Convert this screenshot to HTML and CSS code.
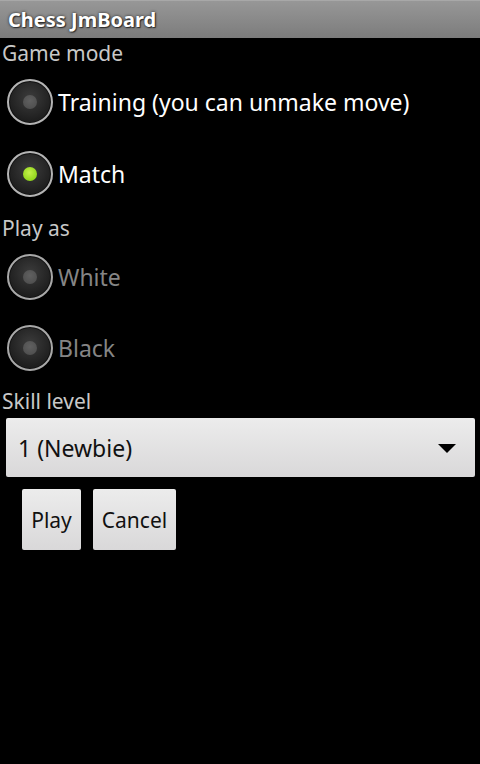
FILE: index.html
```html
<!DOCTYPE html>
<html lang="en">
<head>
    <meta charset="UTF-8">
    <meta name="viewport" content="width=device-width, initial-scale=1.0">
    <title>Chess JmBoard</title>
    <link rel="stylesheet" href="styles.css">
</head>
<body>

<!-- Title Bar -->
<div class="title-bar">Chess JmBoard</div>

<!-- Game mode -->
<div class="label label-first">Game mode</div>
<div class="radio-row">
    <span class="radio"></span>
    <span class="radio-text">Training (you can unmake move)</span>
</div>
<div class="radio-row">
    <span class="radio checked"></span>
    <span class="radio-text">Match</span>
</div>

<!-- Play as -->
<div class="label">Play as</div>
<div class="radio-row disabled">
    <span class="radio"></span>
    <span class="radio-text">White</span>
</div>
<div class="radio-row disabled">
    <span class="radio"></span>
    <span class="radio-text">Black</span>
</div>

<!-- Skill level -->
<div class="label">Skill level</div>
<div class="spinner">
    <span class="spinner-text">1 (Newbie)</span>
    <span class="spinner-arrow"></span>
</div>

<div class="buttons">
    <button class="btn btn-play">Play</button>
    <button class="btn btn-cancel">Cancel</button>
</div>

</body>
</html>
```

FILE: styles.css
```css
/* Basic Styling */
body {
    font-family: "Noto Sans", "Open Sans", sans-serif;
    background-color: #000;
    color: #fff;
    margin: 0;
    padding: 0;
}
.title-bar {
    height: 38px;
    line-height: 37px;
    padding-left: 8px;
    background: linear-gradient(#979797, #7c7c7c);
    border-top: 1px solid #a8a8a8;
    box-sizing: border-box;
    font-weight: bold;
    font-size: 20px;
    color: #fff;
    text-shadow: 0 0 3px #222, 1px 1px 1px #333;
}
.label {
    height: 31px;
    line-height: 31px;
    padding-left: 2px;
    font-size: 21px;
    color: #c8c8c8;
    padding-top: 3px;
    box-sizing: border-box;
}
.label-first {
    height: 28px;
    line-height: 28px;
    padding-top: 1px;
}
.radio-row {
    height: 72px;
    display: flex;
    align-items: center;
    padding-left: 7px;
}
.radio-row.disabled {
    height: 71px;
}
.radio {
    width: 46px;
    height: 46px;
    border-radius: 50%;
    box-sizing: border-box;
    border: 2px solid #b4b4b4;
    background: radial-gradient(circle at 50% 40%, #3c3c3c, #1e1e1e 70%);
    box-shadow: inset 0 0 0 1px #111;
    display: flex;
    align-items: center;
    justify-content: center;
    flex-shrink: 0;
}
.radio::after {
    content: "";
    width: 14px;
    height: 14px;
    border-radius: 50%;
    background: radial-gradient(circle at 50% 40%, #606060, #4a4a4a);
}
.radio.checked::after {
    background: radial-gradient(circle at 45% 40%, #c4f04a, #8fd41a 75%);
}
.radio-text {
    margin-left: 5px;
    font-size: 23px;
    color: #fff;
}
.disabled .radio-text {
    color: #858585;
}
.disabled .radio {
    border-color: #a8a8a8;
}
.spinner {
    margin: 4px 5px 0 6px;
    height: 59px;
    border-radius: 2px;
    background: linear-gradient(#ececec, #d9d8d9);
    display: flex;
    align-items: center;
    justify-content: space-between;
    padding: 0 19px 0 12px;
}
.spinner-text {
    font-size: 23px;
    color: #111;
}
.spinner-arrow {
    width: 0;
    height: 0;
    border-left: 9px solid transparent;
    border-right: 9px solid transparent;
    border-top: 9px solid #000;
    margin-top: 2px;
}
.buttons {
    display: flex;
    gap: 12px;
    margin-top: 12px;
    padding-left: 22px;
}
.btn {
    height: 61px;
    border: none;
    border-radius: 2px;
    background: linear-gradient(#ececec, #d9d8d9);
    font-family: "Noto Sans", "Open Sans", sans-serif;
    font-size: 21px;
    color: #111;
    padding: 0;
}
.btn-play {
    width: 59px;
}
.btn-cancel {
    width: 83px;
}
```
